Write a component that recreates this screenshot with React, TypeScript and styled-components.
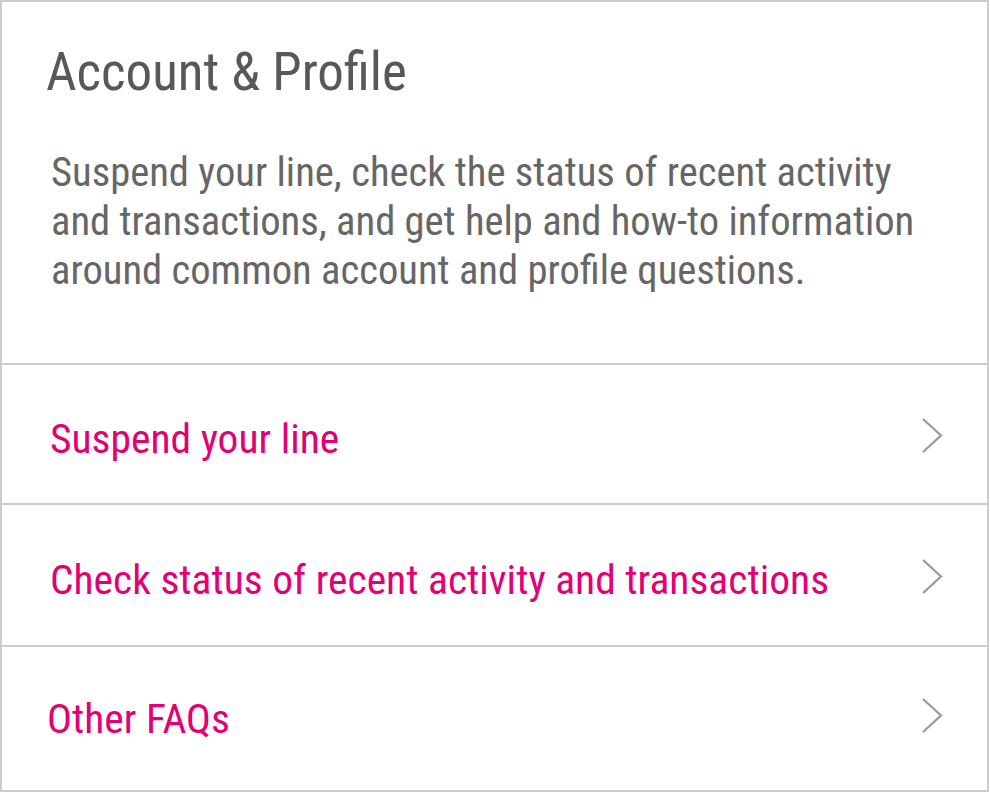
import styled, { createGlobalStyle } from "styled-components";

const Global = createGlobalStyle`
  body {
    margin: 0;
    background: #fff;
    font-family: "Roboto Condensed", Roboto, "Liberation Sans", sans-serif;
  }
`;

const Panel = styled.section`
  width: 989px;
  height: 792px;
  box-sizing: border-box;
  border: 2px solid #cccccc;
  background: #fff;
  display: flex;
  flex-direction: column;
`;

const Header = styled.div`
  padding: 38px 44px 0 44px;
  height: 363px;
  box-sizing: border-box;
  border-bottom: 2px solid #cccccc;
`;

const Title = styled.h1`
  margin: 0;
  font-size: 53px;
  font-weight: 400;
  line-height: 64px;
  color: #58585a;
`;

const Intro = styled.p`
  margin: 44px 0 0 5px;
  font-size: 40.6px;
  line-height: 49px;
  color: #666666;
`;

const Row = styled.a<{ $height?: number; $shift: number; $indent: number }>`
  display: flex;
  align-items: center;
  justify-content: space-between;
  height: ${(p) => (p.$height ? `${p.$height}px` : "auto")};
  flex: ${(p) => (p.$height ? "none" : 1)};
  box-sizing: border-box;
  padding: ${(p) => `${p.$shift}px 44px 0 ${p.$indent}px`};
  border-bottom: ${(p) => (p.$height ? "2px solid #cccccc" : "none")};
  text-decoration: none;
`;

const RowLabel = styled.span`
  font-size: 41.5px;
  color: #e20074;
`;

const ChevronBox = styled.svg`
  margin-top: -6px;
`;

const Chevron = () => (
  <ChevronBox width="24" height="37" viewBox="0 0 24 37" fill="none">
    <path d="M4 2 L22 18.5 L4 35" stroke="#999999" strokeWidth="2.2" />
  </ChevronBox>
);

const links = [
  { label: "Suspend your line", height: 140, shift: 8, indent: 48 },
  {
    label: "Check status of recent activity and transactions",
    height: 142,
    shift: 8,
    indent: 48,
  },
  { label: "Other FAQs", height: 0, shift: 0, indent: 45 },
];

export default function App() {
  return (
    <>
      <Global />
      <Panel>
        <Header>
          <Title>Account &amp; Profile</Title>
          <Intro>
            Suspend your line, check the status of recent activity and
            transactions, and get help and how-to information around common
            account and profile questions.
          </Intro>
        </Header>
        {links.map((l) => (
          <Row
            key={l.label}
            href="#"
            $height={l.height}
            $shift={l.shift}
            $indent={l.indent}
          >
            <RowLabel>{l.label}</RowLabel>
            <Chevron />
          </Row>
        ))}
      </Panel>
    </>
  );
}
